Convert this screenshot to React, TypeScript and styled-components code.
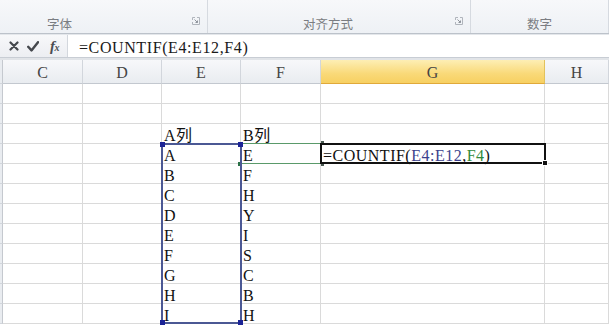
import React from "react";
import styled, { createGlobalStyle } from "styled-components";

const GlobalStyle = createGlobalStyle`
  html, body { margin: 0; padding: 0; background: #ffffff; overflow: hidden; }
  * { box-sizing: border-box; }
`;

const CELL_FONT = `"Liberation Serif", "Noto Sans CJK SC", serif`;

const Page = styled.div`
  width: 609px;
  height: 326px;
  display: flex;
  flex-direction: column;
  overflow: hidden;
  background: #fff;
`;

const Ribbon = styled.div`
  height: 34px;
  display: flex;
  background: linear-gradient(#f7f8fa, #eef1f5);
  border-bottom: 1px solid #bcc2ca;
`;

const RibbonGroup = styled.div<{ $w?: number; $padRight?: number }>`
  ${(p) => (p.$w ? `width: ${p.$w}px;` : "flex: 1;")}
  display: flex;
  align-items: flex-end;
  padding-bottom: 1px;
  padding-right: ${(p) => p.$padRight ?? 0}px;
  border-right: 1px solid #d6dae0;
  position: relative;
`;

const GroupLabel = styled.div`
  flex: 1;
  text-align: center;
  font-family: "Noto Sans CJK SC", sans-serif;
  font-size: 12.5px;
  line-height: 16px;
  color: #7a7d82;
`;

const Launcher = styled.svg`
  position: absolute;
  bottom: 8px;
`;

const FormulaBar = styled.div`
  height: 24px;
  display: flex;
  border-top: 1px solid #e4e7eb;
  border-bottom: 1px solid #c8cdd4;
`;

const FormulaTools = styled.div`
  width: 68px;
  display: flex;
  align-items: center;
  padding-left: 9px;
  background: linear-gradient(#f7f8fa, #eceef2);
  border-right: 1px solid #d3d7dd;
`;

const ToolIcon = styled.svg<{ $mr: number }>`
  margin-right: ${(p) => p.$mr}px;
  flex: none;
`;

const FxLabel = styled.span`
  font-family: "Liberation Serif", serif;
  font-style: italic;
  font-weight: bold;
  font-size: 15px;
  color: #4a4d52;
  letter-spacing: -0.5px;
  & > sub { font-size: 10px; vertical-align: baseline; }
`;

const FormulaInput = styled.div`
  flex: 1;
  display: flex;
  align-items: center;
  padding-left: 11px;
  padding-top: 3px;
  background: #fff;
  font-family: ${CELL_FONT};
  font-size: 16px;
  letter-spacing: 0.6px;
  color: #1a1a1a;
  white-space: pre;
`;

const Band = styled.div`
  height: 2px;
  background: #e1e4e8;
`;

const Sheet = styled.div`
  flex: 1;
  display: grid;
  grid-template-columns: 3px 80px 79px 79px 80px 224px 1fr;
  grid-template-rows: 24px repeat(12, 20px) 1fr;
`;

const ColHead = styled.div<{ $col: number; $active?: boolean }>`
  grid-row: 1;
  grid-column: ${(p) => p.$col};
  display: flex;
  align-items: center;
  justify-content: center;
  font-family: ${CELL_FONT};
  font-size: 16px;
  color: #444;
  padding-top: 2px;
  background: ${(p) =>
    p.$active ? "linear-gradient(#fdeeb4, #f9d978 60%, #f7d062)" : "linear-gradient(#f7f8fa, #e9ecf0)"};
  border-right: 1px solid ${(p) => (p.$active ? "#e2c25c" : "#d2d6dc")};
  border-bottom: 1px solid ${(p) => (p.$active ? "#e0a93a" : "#c3c8cf")};
`;

const RowHead = styled.div<{ $row: number }>`
  grid-row: ${(p) => p.$row};
  grid-column: 1;
  background: #e9ecf0;
  border-right: 1px solid #c5c9cf;
  border-bottom: 1px solid #d2d6dc;
`;

const Cell = styled.div<{ $row: number; $col: number }>`
  grid-row: ${(p) => p.$row};
  grid-column: ${(p) => p.$col};
  display: flex;
  align-items: flex-end;
  padding: 0 0 0 2px;
  border-right: 1px solid #dadada;
  border-bottom: 1px solid #dadada;
  font-family: ${CELL_FONT};
  font-size: 16px;
  line-height: 15px;
  letter-spacing: 0.5px;
  color: #111;
  white-space: pre;
  overflow: visible;
`;

const Ref = styled.span<{ $c: string }>`
  color: ${(p) => p.$c};
`;

const Frame = styled.div<{ $row: string; $col: string; $color: string; $w: number; $z: number }>`
  grid-row: ${(p) => p.$row};
  grid-column: ${(p) => p.$col};
  margin: -1px -1px 0 -1px;
  border: ${(p) => p.$w}px solid ${(p) => p.$color};
  position: relative;
  z-index: ${(p) => p.$z};
  pointer-events: none;
`;

const Handle = styled.div<{ $pos: "tl" | "tr" | "bl" | "br"; $color: string; $size?: number }>`
  position: absolute;
  width: ${(p) => p.$size ?? 5}px;
  height: ${(p) => p.$size ?? 5}px;
  background: ${(p) => p.$color};
  ${(p) => (p.$pos[0] === "t" ? "top: -3px;" : "bottom: -3px;")}
  ${(p) => (p.$pos[1] === "l" ? "left: -3px;" : "right: -3px;")}
`;

const FillHandle = styled.div`
  position: absolute;
  right: -4px;
  bottom: -4px;
  width: 6px;
  height: 6px;
  background: #111;
  border: 1px solid #fff;
`;

const columns = ["C", "D", "E", "F", "G", "H"];
const colE = ["", "", "A列", "A", "B", "C", "D", "E", "F", "G", "H", "I"];
const colF = ["", "", "B列", "E", "F", "H", "Y", "I", "S", "C", "B", "H"];

const LauncherIcon = ({ right }: { right: number }) => (
  <Launcher width="8" height="8" viewBox="0 0 8 8" style={{ right }}>
    <path d="M0.5 3V0.5H3 M5 0.5h2.5v7H0.5V5" stroke="#b0b5bc" fill="none" strokeWidth="1" />
    <path d="M2.5 2.5l3 3 M5.5 3.5v2h-2" stroke="#8f959d" fill="none" strokeWidth="1" />
  </Launcher>
);

export default function App() {
  const rows = Array.from({ length: 12 }, (_, i) => i);
  return (
    <>
      <GlobalStyle />
      <Page>
        <Ribbon>
          <RibbonGroup $w={208} $padRight={88}>
            <GroupLabel>字体</GroupLabel>
            <LauncherIcon right={7} />
          </RibbonGroup>
          <RibbonGroup $w={263} $padRight={22}>
            <GroupLabel>对齐方式</GroupLabel>
            <LauncherIcon right={7} />
          </RibbonGroup>
          <RibbonGroup $padRight={0}>
            <GroupLabel>数字</GroupLabel>
          </RibbonGroup>
        </Ribbon>
        <FormulaBar>
          <FormulaTools>
            <ToolIcon $mr={8} width="10" height="10" viewBox="0 0 10 10">
              <path d="M1.5 1.5l7 7 M8.5 1.5l-7 7" stroke="#45484d" strokeWidth="2.2" strokeLinecap="round" />
            </ToolIcon>
            <ToolIcon $mr={11} width="12" height="11" viewBox="0 0 12 11">
              <path d="M1.2 5.8l3.3 3.6L11 1.2" stroke="#45484d" strokeWidth="2.4" fill="none" strokeLinecap="round" strokeLinejoin="round" />
            </ToolIcon>
            <FxLabel>
              f<sub>x</sub>
            </FxLabel>
          </FormulaTools>
          <FormulaInput>=COUNTIF(E4:E12,F4)</FormulaInput>
        </FormulaBar>
        <Band />
        <Sheet>
          <RowHead $row={1} />
          {columns.map((c, i) => (
            <ColHead key={c} $col={i + 2} $active={c === "G"}>
              {c}
            </ColHead>
          ))}
          {rows.map((r) => (
            <React.Fragment key={r}>
              <RowHead $row={r + 2} />
              {columns.map((c, ci) => {
                let content: React.ReactNode = "";
                if (c === "E") content = colE[r];
                if (c === "F") content = colF[r];
                if (c === "G" && r === 3)
                  content = (
                    <>
                      =COUNTIF(<Ref $c="#3b3f8c">E4:E12</Ref>,<Ref $c="#2f8a3c">F4</Ref>)
                    </>
                  );
                return (
                  <Cell key={c} $row={r + 2} $col={ci + 2}>
                    {content}
                  </Cell>
                );
              })}
            </React.Fragment>
          ))}
          <Frame $row="5 / 14" $col="4" $color="#4b5894" $w={2} $z={2}>
            <Handle $pos="tl" $color="#1b2396" />
            <Handle $pos="tr" $color="#1b2396" />
            <Handle $pos="bl" $color="#1b2396" />
            <Handle $pos="br" $color="#1b2396" />
          </Frame>
          <Frame $row="5" $col="5" $color="#5a9a6a" $w={1} $z={1}>
            <Handle $pos="bl" $color="#2a7046" $size={4} />
            <Handle $pos="tr" $color="#4a5a52" $size={3} />
            <Handle $pos="br" $color="#4a5a52" $size={3} />
          </Frame>
          <Frame $row="5" $col="6" $color="#111111" $w={2} $z={3}>
            <FillHandle />
          </Frame>
        </Sheet>
      </Page>
    </>
  );
}
